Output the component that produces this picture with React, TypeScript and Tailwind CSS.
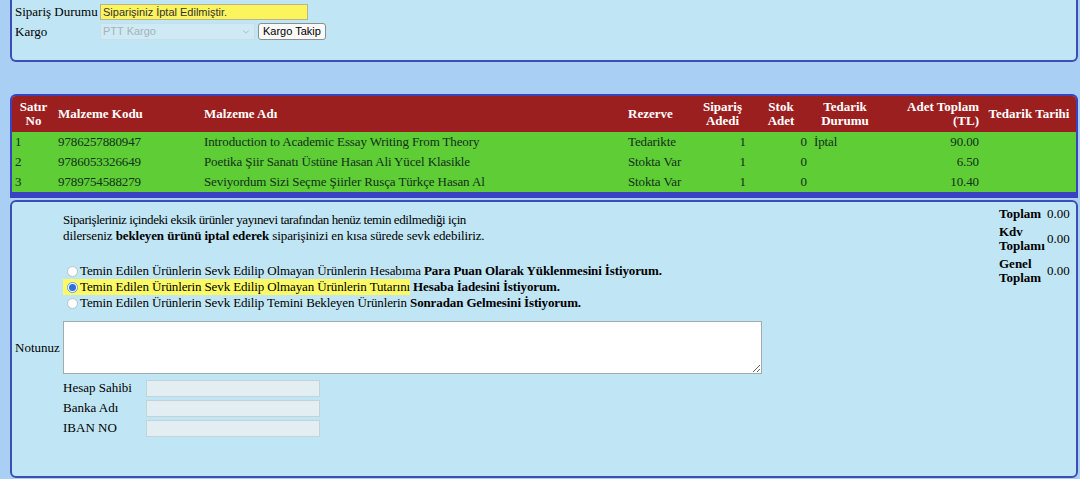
import { ChevronDown } from 'lucide-react';

type Row = {
  no: string;
  kod: string;
  ad: string;
  rezerve: string;
  adet: string;
  stok: string;
  durum: string;
  toplam: string;
};

const rows: Row[] = [
  {
    no: '1',
    kod: '9786257880947',
    ad: 'Introduction to Academic Essay Writing From Theory',
    rezerve: 'Tedarikte',
    adet: '1',
    stok: '0',
    durum: 'İptal',
    toplam: '90.00',
  },
  {
    no: '2',
    kod: '9786053326649',
    ad: 'Poetika Şiir Sanatı Üstüne Hasan Ali Yücel Klasikle',
    rezerve: 'Stokta Var',
    adet: '1',
    stok: '0',
    durum: '',
    toplam: '6.50',
  },
  {
    no: '3',
    kod: '9789754588279',
    ad: 'Seviyordum Sizi Seçme Şiirler Rusça Türkçe Hasan Al',
    rezerve: 'Stokta Var',
    adet: '1',
    stok: '0',
    durum: '',
    toplam: '10.40',
  },
];

function Radio({ checked }: { checked?: boolean }) {
  return (
    <span
      className={
        checked
          ? 'ml-[4px] mr-[2px] inline-flex h-[11px] w-[11px] shrink-0 items-center justify-center rounded-full border border-[#6d9be0] bg-white'
          : 'ml-[4px] mr-[2px] inline-flex h-[11px] w-[11px] shrink-0 rounded-full border border-[#b9c4c8] bg-white'
      }
    >
      {checked && <span className="h-[7px] w-[7px] rounded-full bg-[#2f6fdc]" />}
    </span>
  );
}

function SummaryTable() {
  return (
    <div className="mr-[2px] grid w-[77px] grid-cols-[48px_1fr] content-start items-center self-start pt-[3px] text-[13px] leading-[14px]">
      <div className="py-[2px] pl-[2px] font-bold">Toplam</div>
      <div className="py-[2px] pl-[2px]">0.00</div>
      <div className="py-[2px] pl-[2px] font-bold">
        Kdv
        <br />
        Toplamı
      </div>
      <div className="py-[2px] pl-[2px]">0.00</div>
      <div className="py-[2px] pl-[2px] font-bold">
        Genel
        <br />
        Toplam
      </div>
      <div className="py-[2px] pl-[2px]">0.00</div>
    </div>
  );
}

export default function App() {
  return (
    <div className="h-[479px] w-[1080px] overflow-hidden bg-[#a9cff4] font-['Liberation_Serif',serif] text-[13px] text-black">
      {/* üst panel: sipariş durumu + kargo */}
      <div className="ml-[10px] mr-[2px] h-[62px] rounded-b-[6px] border-x-2 border-b-2 border-[#3c4db3] bg-[#c0e6f5] pl-[3px] pt-[4px]">
        <div className="flex h-[16px] items-center">
          <span className="w-[85px]">Sipariş Durumu</span>
          <div className="flex h-[16px] w-[208px] items-center border border-[#b9b58a] bg-[#fbf45c] pl-[2px] font-['Liberation_Sans',sans-serif] text-[11px] text-[#333]">
            Siparişiniz İptal Edilmiştir.
          </div>
        </div>
        <div className="mt-[3px] flex h-[17px] items-center">
          <span className="w-[85px]">Kargo</span>
          <div className="flex h-[17px] w-[155px] items-center justify-between border border-[#c6dfe8] bg-[#cfeaf4] pl-[2px] pr-[3px] font-['Liberation_Sans',sans-serif] text-[11px] text-[#a5b3b9]">
            <span>PTT Kargo</span>
            <ChevronDown className="h-[10px] w-[10px]" strokeWidth={2} />
          </div>
          <button className="ml-[3px] h-[17px] rounded-[3px] border border-[#8d8d8d] bg-[#fafafa] px-[4px] font-['Liberation_Sans',sans-serif] text-[11px] leading-[15px] text-black">
            Kargo Takip
          </button>
        </div>
      </div>

      {/* ürün tablosu */}
      <div className="ml-[10px] mr-[2px] mt-[32px] overflow-hidden rounded-t-[6px] border-x-2 border-b-[6px] border-t-2 border-[#3a41c2]">
        <table className="w-full table-fixed border-collapse">
          <colgroup>
            <col className="w-[43px]" />
            <col className="w-[146px]" />
            <col className="w-[424px]" />
            <col className="w-[68px]" />
            <col className="w-[59px]" />
            <col className="w-[58px]" />
            <col className="w-[70px]" />
            <col className="w-[102px]" />
            <col className="w-[94px]" />
          </colgroup>
          <thead>
            <tr className="h-[36px] bg-[#9c1f20] text-[13px] font-bold leading-[14px] text-white">
              <th className="px-[3px] text-center">
                Satır
                <br />
                No
              </th>
              <th className="px-[3px] text-left">Malzeme Kodu</th>
              <th className="px-[3px] text-left">Malzeme Adı</th>
              <th className="px-[3px] text-left">Rezerve</th>
              <th className="px-[3px] text-center">
                Sipariş
                <br />
                Adedi
              </th>
              <th className="px-[3px] text-center">
                Stok
                <br />
                Adet
              </th>
              <th className="px-[3px] text-center">
                Tedarik
                <br />
                Durumu
              </th>
              <th className="px-[3px] text-right">
                Adet Toplam
                <br />
                (TL)
              </th>
              <th className="whitespace-nowrap px-[3px] text-center">Tedarik Tarihi</th>
            </tr>
          </thead>
          <tbody>
            {rows.map((r) => (
              <tr
                key={r.no}
                className="h-[20px] bg-[#5ecd36] text-[13px] leading-[14px] tracking-[-0.12px] text-[#13301a]"
              >
                <td className="px-[3px]">{r.no}</td>
                <td className="px-[3px]">{r.kod}</td>
                <td className="truncate px-[3px]">{r.ad}</td>
                <td className="px-[3px]">{r.rezerve}</td>
                <td className="pr-[6px] text-right">{r.adet}</td>
                <td className="px-[3px] text-right">{r.stok}</td>
                <td className="px-[4px]">{r.durum}</td>
                <td className="px-[3px] text-right">{r.toplam}</td>
                <td className="px-[3px]" />
              </tr>
            ))}
          </tbody>
        </table>
      </div>

      {/* alt panel: eksik ürün tercihi */}
      <div className="ml-[10px] mr-[2px] mt-[2px] flex h-[278px] rounded-[6px] border-2 border-[#3c4db3] bg-[#c0e6f5]">
        <div className="flex-1">
          <p className="ml-[51px] pt-[10px] leading-[16px]">
            <span className="tracking-[-0.42px]">
              Siparişleriniz içindeki eksik ürünler yayınevi tarafından henüz temin edilmediği için
            </span>
            <br />
            <span className="tracking-[-0.1px]">
              dilerseniz <b>bekleyen ürünü iptal ederek</b> siparişinizi en kısa sürede sevk edebiliriz.
            </span>
          </p>

          <div className="ml-[51px] mt-[19px] leading-[16px] tracking-[-0.12px]">
            <div className="flex items-center">
              <Radio />
              <span>
                Temin Edilen Ürünlerin Sevk Edilip Olmayan Ürünlerin Hesabıma{' '}
                <b>Para Puan Olarak Yüklenmesini İstiyorum.</b>
              </span>
            </div>
            <div className="flex items-center">
              <span className="flex items-center bg-[#fdfa66]">
                <Radio checked />
                <span>Temin Edilen Ürünlerin Sevk Edilip Olmayan Ürünlerin Tutarını</span>
              </span>
              <b className="ml-[3px]">Hesaba İadesini İstiyorum.</b>
            </div>
            <div className="flex items-center">
              <Radio />
              <span>
                Temin Edilen Ürünlerin Sevk Edilip Temini Bekleyen Ürünlerin{' '}
                <b>Sonradan Gelmesini İstiyorum.</b>
              </span>
            </div>
          </div>

          <div className="mt-[10px] flex items-center">
            <label className="w-[51px] pl-[3px]">Notunuz</label>
            <textarea className="block h-[53px] w-[699px] resize border border-[#a3abab] bg-white" />
          </div>

          <div className="ml-[51px] mt-[4px]">
            {['Hesap Sahibi', 'Banka Adı', 'IBAN NO'].map((label) => (
              <div key={label} className="flex h-[20px] items-center">
                <span className="w-[83px]">{label}</span>
                <div className="h-[17px] w-[174px] border border-[#c3d4d9] bg-[#e2eef2]" />
              </div>
            ))}
          </div>
        </div>

        <SummaryTable />
      </div>
    </div>
  );
}
